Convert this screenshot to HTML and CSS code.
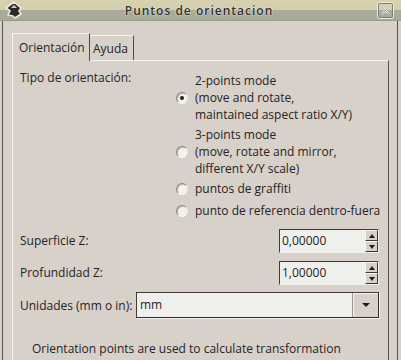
FILE: index.html
```html
<!DOCTYPE html>
<html lang="es">
<head>
    <meta charset="UTF-8">
    <meta name="viewport" content="width=device-width, initial-scale=1.0">
    <title>Puntos de orientacion</title>
    <link rel="stylesheet" href="styles.css">
</head>
<body>
    <div class="titlebar">
        <svg class="app-icon" width="20" height="19" viewBox="0 0 20 19">
            <polygon points="11,1 18,7 16,10 18,13 12,17 10,15 5,14 7,10 3,7" fill="#2b2a26" stroke="#eeeadb" stroke-width="1.6" stroke-linejoin="round"/>
            <polygon points="11,4 14,7 8,7" fill="#d8d4c4"/>
        </svg>
        <span class="title">Puntos de orientacion</span>
        <svg class="close" width="19" height="19" viewBox="0 0 19 19">
            <rect x="1.5" y="1.5" width="16" height="16" rx="2" fill="none" stroke="#eeece2" stroke-width="1"/>
            <rect x="2.5" y="2.5" width="14" height="14" rx="1" fill="none" stroke="#7d7c70" stroke-width="1"/>
            <path d="M6 6 L13 13 M13 6 L6 13" stroke="#efeee6" stroke-width="2"/>
            <path d="M6 6 L13 13 M13 6 L6 13" stroke="#8b8a7e" stroke-width="0.8"/>
        </svg>
    </div>

    <div class="frame">
        <div class="tabs">
            <div class="tab active">Orientación</div>
            <div class="tab">Ayuda</div>
        </div>

        <div class="panel">
            <div class="type-row">
                <div class="type-label">Tipo de orientación:</div>
                <div class="options">
                    <div class="opt">
                        <span class="radio checked"></span>
                        <div class="opt-text">2-points mode<br>(move and rotate,<br>maintained aspect ratio X/Y)</div>
                    </div>
                    <div class="opt">
                        <span class="radio"></span>
                        <div class="opt-text">3-points mode<br>(move, rotate and mirror,<br>different X/Y scale)</div>
                    </div>
                    <div class="opt single">
                        <span class="radio"></span>
                        <div class="opt-text">puntos de graffiti</div>
                    </div>
                    <div class="opt single last">
                        <span class="radio"></span>
                        <div class="opt-text">punto de referencia dentro-fuera</div>
                    </div>
                </div>
            </div>

            <div class="field-row">
                <span class="field-label">Superficie Z:</span>
                <div class="spin">
                    <span class="spin-value">0,00000</span>
                    <div class="spin-buttons">
                        <span class="spin-btn"><span class="arrow-up"></span></span>
                        <span class="spin-btn"><span class="arrow-down"></span></span>
                    </div>
                </div>
            </div>

            <div class="field-row">
                <span class="field-label">Profundidad Z:</span>
                <div class="spin">
                    <span class="spin-value">1,00000</span>
                    <div class="spin-buttons">
                        <span class="spin-btn"><span class="arrow-up"></span></span>
                        <span class="spin-btn"><span class="arrow-down"></span></span>
                    </div>
                </div>
            </div>

            <div class="field-row combo-row">
                <span class="field-label">Unidades (mm o in):</span>
                <div class="combo">
                    <span class="combo-value">mm</span>
                    <span class="combo-btn"><span class="arrow-down"></span></span>
                </div>
            </div>

            <p class="note">Orientation points are used to calculate transformation</p>
        </div>
    </div>
</body>
</html>
```

FILE: styles.css
```css
body {
    margin: 0;
    width: 401px;
    height: 360px;
    overflow: hidden;
    background-color: #d7d1ca;
    font-family: "Open Sans", "Liberation Sans", sans-serif;
    font-size: 12px;
    line-height: 17px;
    color: #26231f;
}

/* barra de titulo */
.titlebar {
    height: 21px;
    display: grid;
    grid-template-columns: 1fr auto 1fr;
    align-items: center;
    padding: 0 6px 0 3px;
    background: linear-gradient(#d6d2b0 0, #d3cfad 45%, #aaab9a 50%, #a8a998 95%, #8f8f82 100%);
}
.app-icon {
    justify-self: start;
}
.close {
    justify-self: end;
}
.title {
    font-size: 12px;
    font-weight: 600;
    letter-spacing: 1px;
    color: #2e2d29;
    text-shadow: 0 0 2px #f2f0e4, 0 0 1px #f2f0e4;
}

/* marco */
.frame {
    height: 339px;
    margin: 0 3px 0 2px;
    border-left: 1px solid #57534d;
    border-right: 1px solid #57534d;
    padding: 12px 8px 0 9px;
}

/* pestañas */
.tabs {
    display: flex;
    align-items: flex-end;
}
.tab {
    box-sizing: border-box;
    height: 25px;
    padding: 4px 0 0 3px;
    width: 44px;
    border-top: 1px solid #f5f3ef;
    border-right: 1px solid #4f4b46;
}
.tab.active {
    position: relative;
    z-index: 1;
    height: 28px;
    width: 78px;
    padding: 5px 0 0 6px;
    margin-bottom: -1px;
    border-left: 1px solid #f5f3ef;
    background-color: #d7d1ca;
}

/* panel */
.panel {
    height: 300px;
    border-top: 1px solid #f5f3ef;
    border-left: 1px solid #f5f3ef;
    border-right: 1px solid #514d48;
    padding: 8px 9px 0 7px;
}

.type-row {
    display: grid;
    grid-template-columns: 155px auto;
}
.options {
    padding-top: 3px;
}
.opt {
    display: flex;
    align-items: center;
    margin-bottom: 3px;
}
.opt.single {
    height: 22px;
    align-items: flex-start;
    margin-bottom: 0;
}
.opt.last {
    height: 17px;
}
.opt-text {
    margin-left: 7px;
    white-space: nowrap;
}
.radio {
    box-sizing: border-box;
    width: 12px;
    height: 12px;
    margin-left: 1px;
    border-radius: 50%;
    background-color: #f3f2ee;
    border: 1px solid;
    border-color: #8c8780 #e9e6e1 #f7f6f3 #8c8780;
    box-shadow: inset 1px 1px 0 #bdb8b1;
    flex-shrink: 0;
    display: flex;
    align-items: center;
    justify-content: center;
}
.opt.single .radio {
    margin-top: 3px;
}
.radio.checked::after {
    content: "";
    width: 4px;
    height: 4px;
    border-radius: 50%;
    background-color: #1f1d1a;
}

/* campos */
.field-row {
    display: flex;
    align-items: center;
    justify-content: space-between;
    margin-top: 8px;
}
.type-row + .field-row {
    margin-top: 10px;
}
.field-label {
    padding-bottom: 2px;
}
.spin {
    box-sizing: border-box;
    width: 100px;
    height: 24px;
    display: flex;
    border: 1px solid;
    border-color: #3f3c38 #f3f1ed #f3f1ed #3f3c38;
    background-color: #eff0ec;
}
.spin-value {
    flex: 1;
    padding: 2px 0 0 2px;
}
.spin-buttons {
    width: 13px;
    display: flex;
    flex-direction: column;
    background-color: #d7d1ca;
}
.spin-btn {
    flex: 1;
    box-sizing: border-box;
    display: flex;
    align-items: center;
    justify-content: center;
    border: 1px solid;
    border-color: #f5f3ef #3d3a36 #3d3a36 #f5f3ef;
}
.arrow-up,
.arrow-down {
    width: 0;
    height: 0;
    border-left: 3px solid transparent;
    border-right: 3px solid transparent;
}
.arrow-up {
    border-bottom: 4px solid #1f1d1a;
}
.arrow-down {
    border-top: 4px solid #1f1d1a;
}

.combo-row {
    margin-top: 7px;
}
.combo-row .field-label {
    padding-bottom: 0;
}
.combo {
    box-sizing: border-box;
    width: 243px;
    height: 26px;
    display: flex;
    border: 1px solid;
    border-color: #3f3c38 #2f2c29 #2f2c29 #3f3c38;
    box-shadow: 1px 1px 0 #f3f1ed;
    background-color: #eff0ec;
}
.combo-value {
    flex: 1;
    padding: 3px 0 0 3px;
}
.combo-btn {
    box-sizing: border-box;
    width: 26px;
    display: flex;
    align-items: center;
    justify-content: center;
    background-color: #d7d1ca;
    border-left: 1px solid #9d978f;
    box-shadow: inset 1px 1px 0 #f5f3ef;
}
.combo-btn .arrow-down {
    border-left-width: 4px;
    border-right-width: 4px;
    border-top-width: 4px;
}

.note {
    margin: 22px 0 0 12px;
    white-space: nowrap;
}
```
